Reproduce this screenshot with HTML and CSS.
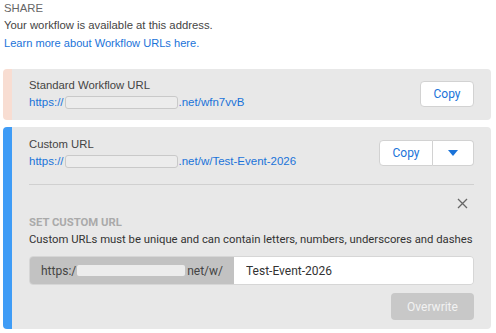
FILE: index.html
```html
<!DOCTYPE html>
<html lang="en">
<head>
  <meta charset="UTF-8" />
  <title>Share</title>
  <link rel="stylesheet" href="styles.css">
</head>
<body>

  <div class="share">
    <div class="share-title">SHARE</div>
    <p class="intro">Your workflow is available at this address.</p>
    <a class="learn" href="#">Learn more about Workflow URLs here.</a>

    <div class="card card-standard">
      <div class="row">
        <div class="info">
          <div class="label">Standard Workflow URL</div>
          <div class="url">https://<span class="mask"></span>.net/wfn7vvB</div>
        </div>
        <button class="btn">Copy</button>
      </div>
    </div>

    <div class="card card-custom">
      <div class="row">
        <div class="info">
          <div class="label">Custom URL</div>
          <div class="url">https://<span class="mask"></span>.net/w/Test-Event-2026</div>
        </div>
        <div class="split">
          <button class="btn split-main">Copy</button>
          <button class="btn split-caret">
            <svg width="10" height="6" viewBox="0 0 10 6"><path d="M0 0h10L5 6z" fill="#1a73d9"/></svg>
          </button>
        </div>
      </div>

      <hr class="divider">

      <div class="custom-head">
        <span class="close">
          <svg width="11" height="11" viewBox="0 0 11 11"><path d="M1 1l9 9M10 1l-9 9" stroke="#666" stroke-width="1.3"/></svg>
        </span>
      </div>
      <div class="custom-title">SET CUSTOM URL</div>
      <p class="hint">Custom URLs must be unique and can contain letters, numbers, underscores and dashes</p>

      <div class="input-group">
        <div class="prefix">https:/<span class="mask mask-light"></span>net/w/</div>
        <input type="text" class="slug" value="Test-Event-2026">
      </div>

      <div class="actions">
        <button class="btn-overwrite" disabled>Overwrite</button>
      </div>
    </div>
  </div>

</body>
</html>
```

FILE: styles.css
```css
body {
  margin: 0;
  background: #fff;
  font-family: "Liberation Sans", Arial, sans-serif;
  color: #444;
}

.share {
  padding: 1px 5px 0 3px;
}

.share-title {
  font-size: 11.3px;
  color: #666;
  margin-left: 1px;
  line-height: 14px;
}

.intro {
  margin: 2px 0 0 1px;
  font-size: 11.3px;
  line-height: 16px;
  color: #444;
}

.learn {
  display: block;
  margin: 2px 0 0 1px;
  font-size: 11.1px;
  line-height: 16px;
  color: #1a73d9;
  text-decoration: none;
}

.card {
  background: #e8e8e8;
  border-radius: 4px;
  border-left: 9px solid;
  padding: 8px 17px 10px 17px;
}

.card-standard {
  border-left-color: #f8ddd2;
  margin-top: 18px;
}

.card-custom {
  border-left-color: #3f9cf6;
  margin-top: 7px;
  padding-top: 9px;
  padding-bottom: 9px;
}

.row {
  display: flex;
  align-items: center;
  justify-content: space-between;
}

.label {
  font-size: 11.3px;
  line-height: 16px;
  color: #444;
}

.url {
  display: flex;
  align-items: center;
  font-size: 11.5px;
  line-height: 16px;
  color: #1a73d9;
  margin-top: 1px;
}

.mask {
  display: inline-block;
  width: 111px;
  height: 11px;
  border: 1px solid #c9c9c9;
  border-radius: 3px;
  background: #ececec;
  margin: 0 1px;
}

.btn {
  font-family: Roboto, sans-serif;
  font-size: 12px;
  color: #1a73d9;
  background: #fff;
  border: 1px solid #d2d2d2;
  border-radius: 4px;
  width: 54px;
  height: 26px;
  padding: 0;
  cursor: pointer;
}

.split {
  display: flex;
}

.split-main {
  border-radius: 4px 0 0 4px;
}

.split-caret {
  width: 41px;
  border-left: none;
  border-radius: 0 4px 4px 0;
  display: flex;
  align-items: center;
  justify-content: center;
}

.divider {
  border: none;
  border-top: 1px solid #d0d0d0;
  margin: 15px 0 0 0;
}

.custom-head {
  display: flex;
  justify-content: flex-end;
  padding: 13px 6px 0 0;
  height: 12px;
}

.close {
  display: flex;
}

.custom-title {
  font-family: Roboto, sans-serif;
  font-weight: bold;
  font-size: 11.3px;
  color: #aaa;
  margin-top: 6px;
  line-height: 14px;
}

.hint {
  font-family: Roboto, sans-serif;
  font-size: 11.3px;
  line-height: 16px;
  color: #333;
  margin: 2px 0 0 0;
  white-space: nowrap;
}

.input-group {
  display: flex;
  margin-top: 8px;
  height: 29px;
  box-sizing: border-box;
  border: 1px solid #d6d6d6;
  border-radius: 4px;
  overflow: hidden;
}

.prefix {
  display: flex;
  align-items: center;
  background: #c2c2c2;
  font-family: Roboto, sans-serif;
  font-size: 12px;
  color: #444;
  padding: 0 11px;
  width: 182px;
}

.mask-light {
  width: 112px;
  height: 11px;
  border: none;
  background: #ececec;
  border-radius: 2px;
  margin: 0 2px 0 1px;
}

.slug {
  flex: 1;
  border: none;
  outline: none;
  background: #fff;
  font-family: Roboto, sans-serif;
  font-size: 12px;
  color: #333;
  padding: 0 12px;
}

.actions {
  display: flex;
  justify-content: flex-end;
  margin-top: 8px;
}

.btn-overwrite {
  font-family: Roboto, sans-serif;
  font-size: 12px;
  width: 83px;
  height: 27px;
  background: #c8c8c8;
  color: #f2f2f2;
  border: none;
  border-radius: 4px;
}
```
